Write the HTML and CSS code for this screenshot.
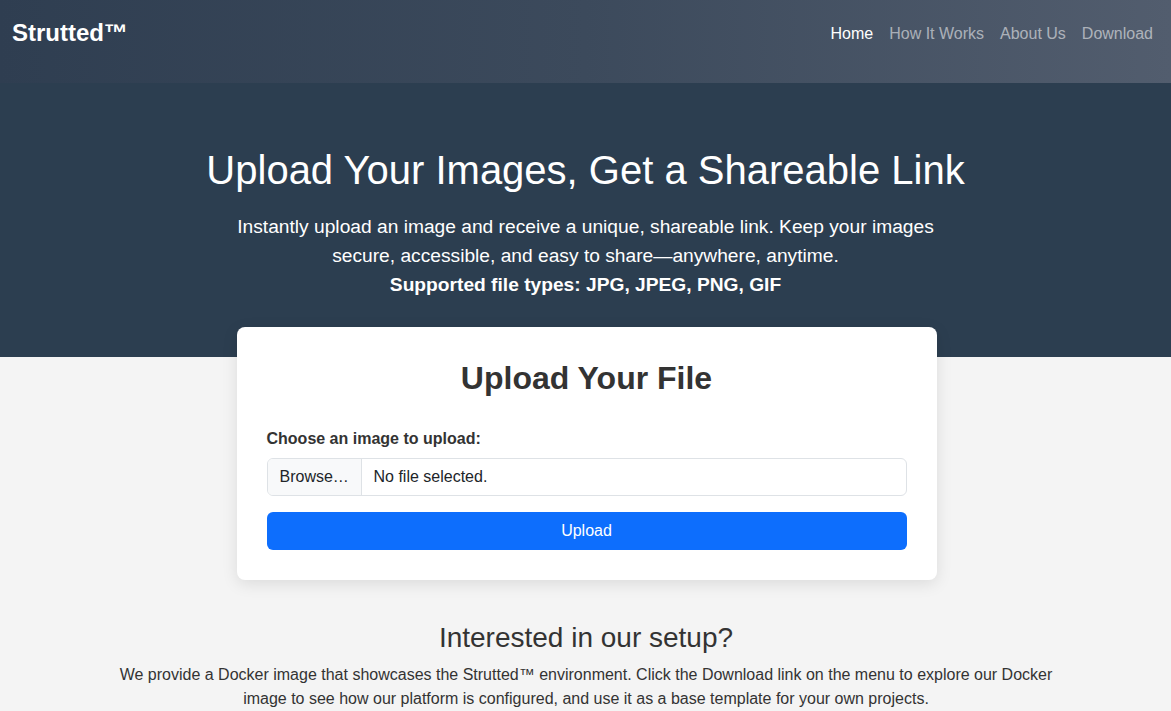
FILE: index.html
```html
<!DOCTYPE html>
<html lang="en">
<head>
<meta charset="utf-8">
<title>Strutted</title>
<link rel="stylesheet" href="styles.css">
</head>
<body>
<nav class="navbar">
  <a class="brand" href="#">Strutted™</a>
  <ul class="nav-links">
    <li><a class="active" href="#">Home</a></li>
    <li><a href="#">How It Works</a></li>
    <li><a href="#">About Us</a></li>
    <li><a href="#">Download</a></li>
  </ul>
</nav>
<header class="hero">
  <h1>Upload Your Images, Get a Shareable Link</h1>
  <p class="lead">Instantly upload an image and receive a unique, shareable link. Keep your images secure, accessible, and easy to share—anywhere, anytime.</p>
  <p class="types">Supported file types: JPG, JPEG, PNG, GIF</p>
</header>
<main class="content">
  <section class="card">
    <h2>Upload Your File</h2>
    <label class="label">Choose an image to upload:</label>
    <div class="file-input">
      <span class="browse">Browse…</span>
      <span class="filename">No file selected.</span>
    </div>
    <button class="btn">Upload</button>
  </section>
  <section class="setup">
    <h3>Interested in our setup?</h3>
    <p>We provide a Docker image that showcases the Strutted™ environment. Click the Download link on the menu to explore our Docker image to see how our platform is configured, and use it as a base template for your own projects.</p>
  </section>
</main>
</body>
</html>
```
FILE: styles.css
```css
* { box-sizing: border-box; }
html, body { margin: 0; padding: 0; }
body {
  font-family: "Liberation Sans", Arial, sans-serif;
  font-size: 16px;
  line-height: 1.5;
  color: #333;
  background: #f4f4f4;
}
.navbar {
  height: 83px;
  display: flex;
  justify-content: space-between;
  align-items: flex-start;
  padding: 18px 10px 0 12px;
  background: linear-gradient(90deg, #2f3e51 0%, #3c4a5c 50%, #525d6e 100%);
}
.brand {
  color: #fff;
  font-weight: 700;
  font-size: 24px;
  line-height: 30px;
  text-decoration: none;
}
.nav-links {
  display: flex;
  list-style: none;
  margin: 0;
  padding: 4px 0 0 0;
}
.nav-links a {
  display: block;
  padding: 0 8px;
  color: rgba(255,255,255,0.55);
  text-decoration: none;
  line-height: 24px;
}
.nav-links a.active { color: #fff; }
.hero {
  background: #2c3e50;
  color: #fff;
  text-align: center;
  padding: 63px 12px 58px;
}
.hero h1 {
  margin: 0 0 18px;
  font-size: 40px;
  font-weight: 400;
  line-height: 48px;
}
.hero .lead {
  max-width: 700px;
  margin: 0 auto;
  font-size: 19.2px;
  line-height: 29px;
}
.hero .types {
  margin: 0;
  font-size: 19.2px;
  font-weight: 700;
  line-height: 29px;
}
.content {
  max-width: 960px;
  margin: 0 auto;
  padding: 0 12px;
}
.card {
  width: 700px;
  margin: -30px auto 0;
  background: #fff;
  border-radius: 8px;
  box-shadow: 0 4px 16px rgba(0,0,0,0.1);
  padding: 30px;
  position: relative;
  left: 1px;
}
.card h2 {
  margin: 2px 0 30px;
  text-align: center;
  font-size: 32px;
  font-weight: 700;
  line-height: 38px;
}
.label {
  display: block;
  font-weight: 700;
  margin-bottom: 7px;
}
.file-input {
  display: flex;
  height: 38px;
  border: 1px solid #dee2e6;
  border-radius: 6px;
  overflow: hidden;
  color: #212529;
  background: #fff;
}
.browse {
  width: 94px;
  padding: 6px 12px;
  background: #f8f9fa;
  border-right: 1px solid #dee2e6;
}
.filename { padding: 6px 12px; }
.btn {
  display: block;
  width: 100%;
  height: 38px;
  margin-top: 16px;
  border: 0;
  border-radius: 6px;
  background: #0d6efd;
  color: #fff;
  font-family: inherit;
  font-size: 16px;
}
.setup {
  text-align: center;
  padding: 41px 0 0 1px;
}
.setup h3 {
  margin: 0 0 8px;
  font-size: 28px;
  font-weight: 400;
  line-height: 34px;
}
.setup p { margin: 0; }
```
